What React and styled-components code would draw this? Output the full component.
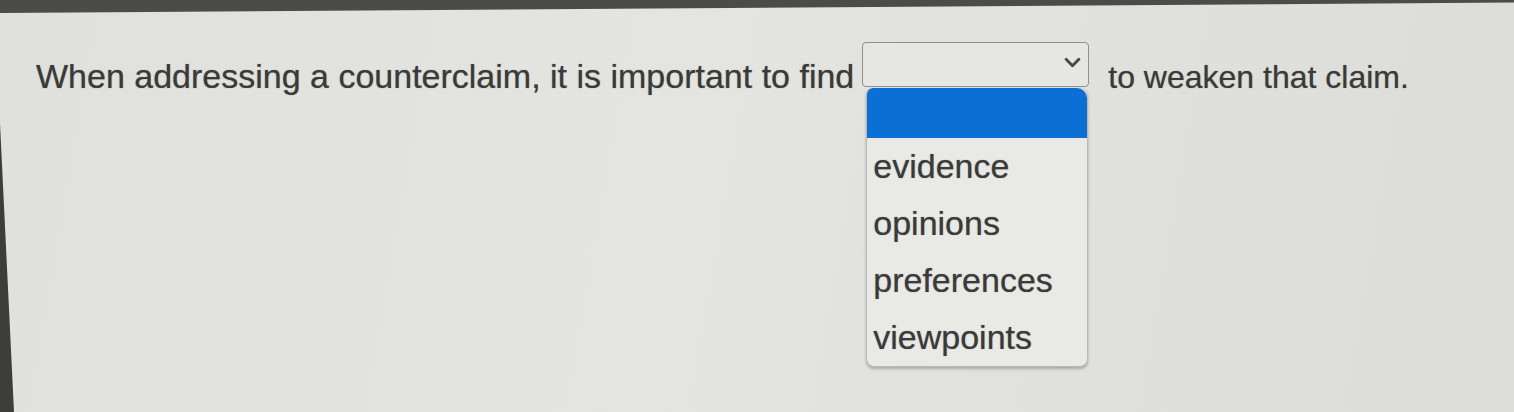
import React from 'react';
import styled, { createGlobalStyle } from 'styled-components';

const options = ['evidence', 'opinions', 'preferences', 'viewpoints'];

const GlobalStyle = createGlobalStyle`
  html, body {
    margin: 0;
    padding: 0;
    background: #dedfdb;
  }
  body {
    font-family: "Liberation Sans", Arial, sans-serif;
  }
`;

function App() {
  return (
    <>
      <GlobalStyle />
      <Screen>
        <Sentence>
          <Words>When addressing a counterclaim, it is important to find</Words>
          <SelectWrap>
            <SelectBox>
              <Chevron viewBox="0 0 16 10">
                <path d="M2 2 L8 8 L14 2" />
              </Chevron>
            </SelectBox>
            <Menu>
              <Highlighted />
              {options.map((o) => (
                <Option key={o}>{o}</Option>
              ))}
            </Menu>
          </SelectWrap>
          <Words $size={32}>to weaken that claim.</Words>
        </Sentence>
      </Screen>
    </>
  );
}

export default App;

const Screen = styled.div`
  position: relative;
  height: 412px;
  overflow: hidden;
  background: linear-gradient(100deg, #e0e0dd 0%, #e4e4e1 45%, #dcddd9 100%);
  &::before {
    content: '';
    position: absolute;
    left: 0;
    top: 0;
    width: 100%;
    height: 13px;
    background: #4b4b48;
    clip-path: polygon(0 0, 100% 0, 100% 20%, 0 100%);
  }
  &::after {
    content: '';
    position: absolute;
    left: 0;
    top: 0;
    width: 14px;
    height: 100%;
    background: #3d3d3b;
    clip-path: polygon(0 30%, 100% 100%, 0 100%);
  }
`;

const Sentence = styled.div`
  display: flex;
  align-items: flex-start;
  padding: 42px 0 0 36px;
`;

const Words = styled.span`
  margin-top: ${(p) => (p.$size ? 15 : 14)}px;
  font-size: ${(p) => p.$size || 34}px;
  line-height: 40px;
  color: #3a3a39;
  text-shadow: 0 0 1px rgba(40, 40, 40, 0.5);
  white-space: nowrap;
`;

const SelectWrap = styled.div`
  position: relative;
  margin: 0 19px 0 8px;
`;

const SelectBox = styled.div`
  box-sizing: border-box;
  width: 227px;
  height: 45px;
  border: 1.5px solid #8f8f8c;
  border-radius: 4px;
  background: #e6e6e3;
  display: flex;
  align-items: center;
  justify-content: flex-end;
  padding-right: 7px;
`;

const Chevron = styled.svg`
  width: 17px;
  height: 11px;
  margin-top: -4px;
  path {
    fill: none;
    stroke: #4a4a48;
    stroke-width: 2.8;
    stroke-linecap: round;
    stroke-linejoin: round;
  }
`;

const Menu = styled.div`
  position: absolute;
  top: 46px;
  left: 4px;
  width: 222px;
  box-sizing: border-box;
  border: 1px solid #b9b9b6;
  border-top: none;
  border-radius: 6px 8px 8px 8px;
  background: #e9e9e6;
  box-shadow: 0 2px 3px rgba(0, 0, 0, 0.25);
  overflow: hidden;
`;

const Highlighted = styled.div`
  height: 50px;
  background: #0b6fd3;
  border-radius: 6px 10px 0 0;
`;

const Option = styled.div`
  height: 57px;
  display: flex;
  align-items: center;
  padding-left: 6px;
  font-size: 34px;
  color: #3a3a39;
  text-shadow: 0 0 1px rgba(40, 40, 40, 0.5);
`;
